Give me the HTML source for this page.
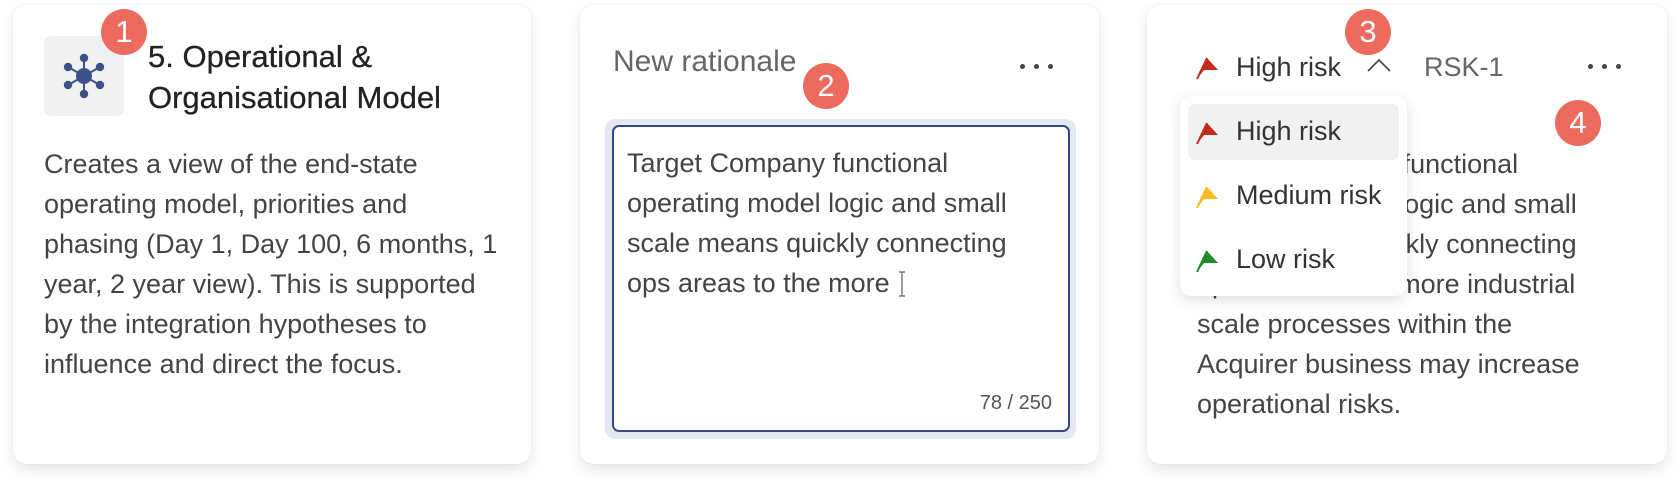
<!DOCTYPE html>
<html><head><style>
*{margin:0;padding:0;box-sizing:border-box}
body{width:1680px;height:484px;background:#fff;font-family:"Liberation Sans",Arial,sans-serif;position:relative;overflow:hidden;color:#3c3c3c}
.card{position:absolute;top:5px;height:459px;background:#fff;border-radius:14px;box-shadow:0 6px 14px rgba(0,0,0,.10),0 0 3px rgba(0,0,0,.05)}
.abs{position:absolute}
.badge{position:absolute;width:46px;height:46px;border-radius:50%;background:#ec6a5e;color:#fff;font-size:31px;line-height:46px;text-align:center}
.body{font-size:27px;line-height:40px;color:#444;white-space:nowrap}
.dot{position:absolute;width:5px;height:5px;border-radius:50%;background:#444}
</style></head><body>

<div class="card" style="left:13px;width:518px"></div>
<div class="card" style="left:580px;width:519px"></div>
<div class="card" style="left:1147px;width:520px"></div>

<!-- card 1 -->
<div class="abs" style="left:44px;top:36px;width:80px;height:80px;background:#f1f1f1;border-radius:6px"></div>
<svg class="abs" style="left:44px;top:36px" width="80" height="80" viewBox="0 0 80 80">
<g stroke="#3d5189" stroke-width="2" fill="#3d5189">
<line x1="40" y1="22" x2="40" y2="58"/><line x1="24" y1="31" x2="56" y2="49"/><line x1="56" y1="31" x2="24" y2="49"/>
<circle cx="40" cy="40" r="7"/><circle cx="40" cy="22" r="3.2"/><circle cx="40" cy="58" r="3.2"/>
<circle cx="24" cy="31" r="3.2"/><circle cx="56" cy="31" r="3.2"/><circle cx="24" cy="49" r="3.2"/><circle cx="56" cy="49" r="3.2"/>
</g></svg>
<div class="badge" style="left:101px;top:9px">1</div>
<div class="abs" style="left:148px;top:36px;font-size:31px;line-height:41px;color:#222;white-space:nowrap;-webkit-text-stroke:0.3px #222">5. Operational &amp;<br>Organisational Model</div>
<div class="abs body" style="left:44px;top:144px">Creates a view of the end-state<br>operating model, priorities and<br>phasing (Day 1, Day 100, 6 months, 1<br>year, 2 year view). This is supported<br>by the integration hypotheses to<br>influence and direct the focus.</div>

<!-- card 2 -->
<div class="abs" style="left:613px;top:45px;font-size:30px;color:#666">New rationale</div>
<div class="dot" style="left:1020px;top:64px"></div><div class="dot" style="left:1034px;top:64px"></div><div class="dot" style="left:1048px;top:64px"></div>
<div class="badge" style="left:803px;top:63px">2</div>
<div class="abs" style="left:605px;top:119px;width:471px;height:320px;background:#e6e8ef;border-radius:10px"></div>
<div class="abs" style="left:612px;top:125px;width:458px;height:307px;background:#fff;border:2px solid #34498a;border-radius:7px"></div>
<div class="abs body" style="left:627px;top:143px">Target Company functional<br>operating model logic and small<br>scale means quickly connecting<br>ops areas to the more <svg width="10" height="26" viewBox="0 0 10 26" style="vertical-align:-5px"><path d="M2 1h6M5 1v24M2 25h6" stroke="#666" stroke-width="1.3" fill="none"/></svg></div>
<div class="abs" style="left:900px;width:152px;text-align:right;top:392px;font-size:20px;color:#555">78 / 250</div>

<!-- card 3 -->
<div class="abs body" style="left:1197px;top:144px">Target Company functional<br>operating model logic and small<br>scale means quickly connecting<br>ops areas to the more industrial<br>scale processes within the<br>Acquirer business may increase<br>operational risks.</div>
<svg class="abs" style="left:1196px;top:55px" width="24" height="26" viewBox="0 0 24 26"><path d="M1 24L11 3l11 12H8z" fill="#c42b1c"/><path d="M1 24L11 3" stroke="#c42b1c" stroke-width="2"/></svg>
<div class="abs" style="left:1236px;top:52px;font-size:27px;color:#333">High risk</div>
<svg class="abs" style="left:1366px;top:57px" width="26" height="16" viewBox="0 0 26 16"><path d="M2 14L13 3l11 11" stroke="#444" stroke-width="1.6" fill="none"/></svg>
<div class="abs" style="left:1424px;top:52px;font-size:27px;color:#666">RSK-1</div>
<div class="dot" style="left:1588px;top:64px"></div><div class="dot" style="left:1602px;top:64px"></div><div class="dot" style="left:1616px;top:64px"></div>
<div class="badge" style="left:1345px;top:9px">3</div>
<div class="badge" style="left:1555px;top:100px">4</div>

<div class="abs" style="left:1180px;top:96px;width:227px;height:200px;background:#fff;border-radius:12px;box-shadow:0 4px 14px rgba(0,0,0,.13)"></div>
<div class="abs" style="left:1188px;top:104px;width:211px;height:56px;background:#f1f1f1;border-radius:7px"></div>
<svg class="abs" style="left:1196px;top:120px" width="24" height="26" viewBox="0 0 24 26"><path d="M1 24L11 3l11 12H8z" fill="#c42b1c"/><path d="M1 24L11 3" stroke="#c42b1c" stroke-width="2"/></svg>
<div class="abs" style="left:1236px;top:116px;font-size:27px;color:#333">High risk</div>
<svg class="abs" style="left:1196px;top:184px" width="24" height="26" viewBox="0 0 24 26"><path d="M1 24L11 3l11 12H8z" fill="#f9bd22"/><path d="M1 24L11 3" stroke="#f9bd22" stroke-width="2"/></svg>
<div class="abs" style="left:1236px;top:180px;font-size:27px;color:#333">Medium risk</div>
<svg class="abs" style="left:1196px;top:248px" width="24" height="26" viewBox="0 0 24 26"><path d="M1 24L11 3l11 12H8z" fill="#228b2e"/><path d="M1 24L11 3" stroke="#228b2e" stroke-width="2"/></svg>
<div class="abs" style="left:1236px;top:244px;font-size:27px;color:#333">Low risk</div>
</body></html>
